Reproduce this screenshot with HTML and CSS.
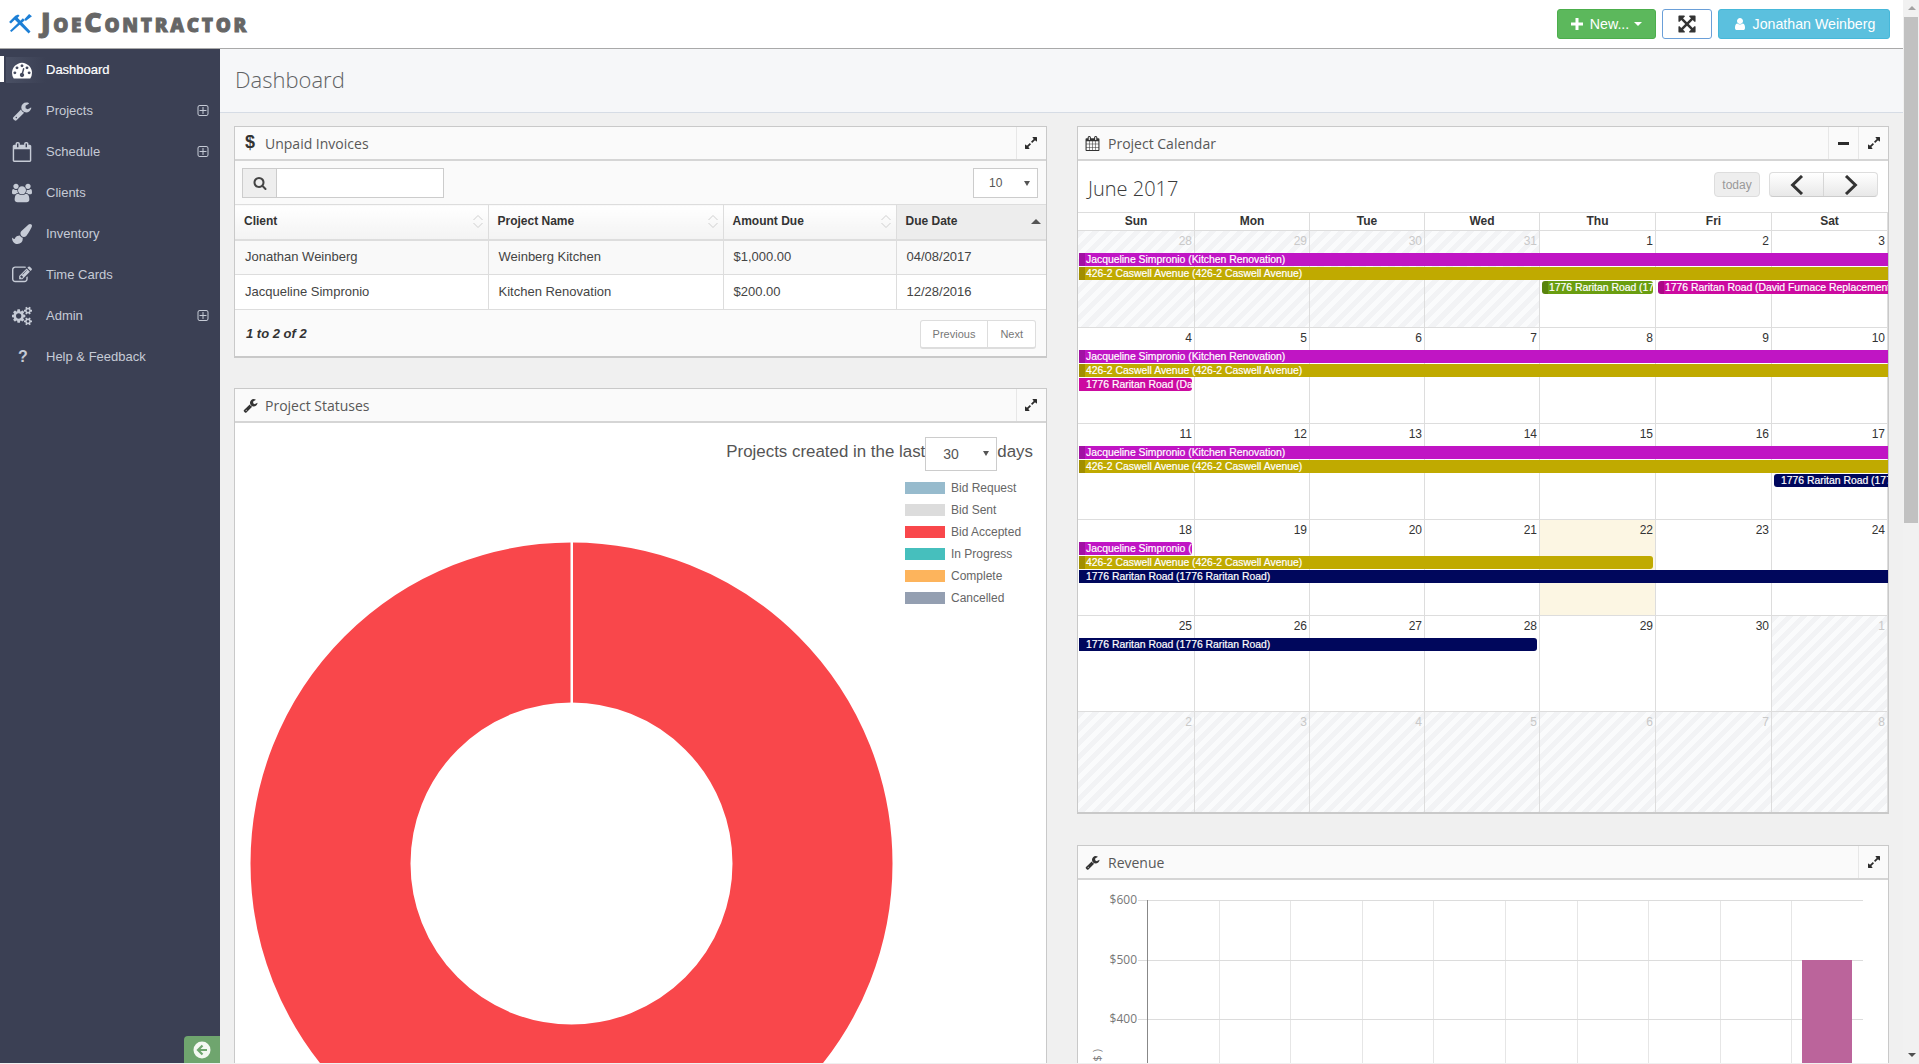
FILE: index.html
```html
<!DOCTYPE html>
<html lang="en">
<head>
<meta charset="utf-8">
<title>JoeContractor - Dashboard</title>
<link rel="stylesheet" href="styles.css">
</head>
<body>
<svg class="sprite" aria-hidden="true">
  <symbol id="i-dash" viewBox="0 0 1792 1792"><path d="M384 1152q0-53-37.5-90.5t-90.5-37.5-90.5 37.5-37.5 90.5 37.5 90.5 90.5 37.5 90.5-37.5 37.5-90.5zm192-448q0-53-37.5-90.5t-90.5-37.5-90.5 37.5-37.5 90.5 37.5 90.5 90.5 37.5 90.5-37.5 37.5-90.5zm428 481l101-382q6-26-7.5-48.5t-38.5-29.5-48 6.5-30 39.5l-101 382q-60 5-107 43.5t-63 98.5q-20 77 20 146t117 89 146-20 89-117q16-60-6-117t-72-91zm660-33q0-53-37.5-90.5t-90.5-37.5-90.5 37.5-37.5 90.5 37.5 90.5 90.5 37.5 90.5-37.5 37.5-90.5zm-640-640q0-53-37.5-90.5t-90.5-37.5-90.5 37.5-37.5 90.5 37.5 90.5 90.5 37.5 90.5-37.5 37.5-90.5zm448 192q0-53-37.5-90.5t-90.5-37.5-90.5 37.5-37.5 90.5 37.5 90.5 90.5 37.5 90.5-37.5 37.5-90.5zm320 448q0 261-141 483-19 29-54 29h-1402q-35 0-54-29-141-221-141-483 0-182 71-348t191-286 286-191 348-71 348 71 286 191 191 286 71 348z"/></symbol>
  <symbol id="i-wrench" viewBox="0 0 1792 1792"><path d="M448 1472q0-26-19-45t-45-19-45 19-19 45 19 45 45 19 45-19 19-45zm644-420l-682 682q-37 37-90 37-52 0-91-37l-106-108q-38-36-38-90 0-53 38-91l681-681q39 98 114.5 173.5t173.5 114.5zm634-435q0 39-23 106-47 134-164.5 217.5t-258.5 83.5q-185 0-316.5-131.5t-131.5-316.5 131.5-316.5 316.5-131.5q58 0 121.5 16.5t107.5 46.5q16 11 16 28t-16 28l-293 169v224l193 107q5-3 79-48.5t135.5-81 70.5-35.5q15 0 23.5 10t8.5 25z"/></symbol>
  <symbol id="i-cal-o" viewBox="0 0 1792 1792"><path d="M192 1664h1408v-1024h-1408v1024zm384-1216v-288q0-14-9-23t-23-9h-64q-14 0-23 9t-9 23v288q0 14 9 23t23 9h64q14 0 23-9t9-23zm768 0v-288q0-14-9-23t-23-9h-64q-14 0-23 9t-9 23v288q0 14 9 23t23 9h64q14 0 23-9t9-23zm384-64v1280q0 52-38 90t-90 38h-1408q-52 0-90-38t-38-90v-1280q0-52 38-90t90-38h128v-96q0-66 47-113t113-47h64q66 0 113 47t47 113v96h384v-96q0-66 47-113t113-47h64q66 0 113 47t47 113v96h128q52 0 90 38t38 90z"/></symbol>
  <symbol id="i-users" viewBox="0 0 1920 1792"><path d="M593 896q-162 5-265 128h-134q-82 0-138-40.5t-56-118.5q0-353 124-353 6 0 43.5 21t97.5 42.5 119 21.5q67 0 133-23-5 37-5 66 0 139 81 256zm1071 637q0 120-73 189.5t-194 69.5h-874q-121 0-194-69.5t-73-189.5q0-53 3.5-103.5t14-109 26.5-108.5 43-97.5 62-81 85.5-53.5 111.5-20q10 0 43 21.5t73 48 107 48 135 21.5 135-21.5 107-48 73-48 43-21.5q61 0 111.5 20t85.5 53.5 62 81 43 97.5 26.5 108.5 14 109 3.5 103.5zm-1024-1277q0 106-75 181t-181 75-181-75-75-181 75-181 181-75 181 75 75 181zm704 384q0 159-112.5 271.5t-271.5 112.5-271.5-112.5-112.5-271.5 112.5-271.5 271.5-112.5 271.5 112.5 112.5 271.5zm576 225q0 78-56 118.5t-138 40.5h-134q-103-123-265-128 81-117 81-256 0-29-5-66 66 23 133 23 59 0 119-21.5t97.5-42.5 43.5-21q124 0 124 353zm-128-609q0 106-75 181t-181 75-181-75-75-181 75-181 181-75 181 75 75 181z"/></symbol>
  <symbol id="i-brush" viewBox="0 0 1792 1792"><path d="M1615 0q70 0 122.5 46.5t52.5 116.5q0 63-45 151-332 629-465 752-97 91-218 91-126 0-216.5-92.5t-90.5-219.5q0-128 92-212l638-579q59-54 130-54zm-909 1034q39 76 106.5 130t150.5 76l1 71q4 213-129.5 347t-348.5 134q-123 0-218-46.5t-152.5-127.5-86.5-183-29-220q7 5 41 30t62 44.5 59 36.5 46 17q41 0 55-37 25-66 57.5-112.5t69.5-76 88-47.5 103-25.5 125-10.5z"/></symbol>
  <symbol id="i-edit" viewBox="0 0 1792 1792"><path d="M888 1184l116-116-152-152-116 116v56h96v96h56zm440-720q-16-16-33 1l-350 350q-17 17-1 33t33-1l350-350q17-17 1-33zm80 594v190q0 119-84.5 203.5t-203.5 84.5h-832q-119 0-203.5-84.5t-84.5-203.5v-832q0-119 84.5-203.5t203.5-84.5h832q63 0 117 25 15 7 18 23 3 17-9 29l-49 49q-14 14-32 8-23-6-45-6h-832q-66 0-113 47t-47 113v832q0 66 47 113t113 47h832q66 0 113-47t47-113v-126q0-13 9-22l64-64q15-15 35-7t20 29zm-96-738l288 288-672 672h-288v-288zm444 132l-92 92-288-288 92-92q28-28 68-28t68 28l152 152q28 28 28 68t-28 68z"/></symbol>
  <symbol id="i-cogs" viewBox="0 0 1920 1792"><path d="M896 896q0-106-75-181t-181-75-181 75-75 181 75 181 181 75 181-75 75-181zm768 512q0-52-38-90t-90-38-90 38-38 90q0 53 37.5 90.5t90.5 37.5 90.5-37.5 37.5-90.5zm0-1024q0-52-38-90t-90-38-90 38-38 90q0 53 37.5 90.5t90.5 37.5 90.5-37.5 37.5-90.5zm-384 421v185q0 10-7 19.5t-16 10.5l-155 24q-11 35-32 76 34 48 90 115 7 11 7 20 0 12-7 19-23 30-82.5 89.5t-78.5 59.5q-11 0-21-7l-115-90q-37 19-77 31-11 108-23 155-7 24-30 24h-186q-11 0-20-7.5t-10-17.5l-23-153q-34-10-75-31l-118 89q-7 7-20 7-11 0-21-8-144-133-144-160 0-9 7-19 10-14 41-53t47-61q-23-44-35-82l-152-24q-10-1-17-9.5t-7-19.5v-185q0-10 7-19.5t16-10.5l155-24q11-35 32-76-34-48-90-115-7-11-7-20 0-12 7-20 22-30 82-89t79-59q11 0 21 7l115 90q34-18 77-32 11-108 23-154 7-24 30-24h186q11 0 20 7.5t10 17.5l23 153q34 10 75 31l118-89q8-7 20-7 11 0 21 8 144 133 144 160 0 8-7 19-12 16-42 54t-45 60q23 48 34 82l152 23q10 2 17 10.5t7 19.5zm640 533v140q0 16-149 31-12 27-30 52 51 113 51 138 0 4-4 7-122 71-124 71-8 0-46-47t-52-68q-20 2-30 2t-30-2q-14 21-52 68t-46 47q-2 0-124-71-4-3-4-7 0-25 51-138-18-25-30-52-149-15-149-31v-140q0-16 149-31 13-29 30-52-51-113-51-138 0-4 4-7 4-2 35-20t59-34 30-16q8 0 46 46.5t52 67.5q20-2 30-2t30 2q51-71 92-112l6-2q4 0 124 70 4 3 4 7 0 25-51 138 17 23 30 52 149 15 149 31zm0-1024v140q0 16-149 31-12 27-30 52 51 113 51 138 0 4-4 7-122 71-124 71-8 0-46-47t-52-68q-20 2-30 2t-30-2q-14 21-52 68t-46 47q-2 0-124-71-4-3-4-7 0-25 51-138-18-25-30-52-149-15-149-31v-140q0-16 149-31 13-29 30-52-51-113-51-138 0-4 4-7 4-2 35-20t59-34 30-16q8 0 46 46.5t52 67.5q20-2 30-2t30 2q51-71 92-112l6-2q4 0 124 70 4 3 4 7 0 25-51 138 17 23 30 52 149 15 149 31z"/></symbol>
  <symbol id="i-plus-sq" viewBox="0 0 1792 1792"><path d="M1344 800v64q0 14-9 23t-23 9h-352v352q0 14-9 23t-23 9h-64q-14 0-23-9t-9-23v-352h-352q-14 0-23-9t-9-23v-64q0-14 9-23t23-9h352v-352q0-14 9-23t23-9h64q14 0 23 9t9 23v352h352q14 0 23 9t9 23zm128 448v-832q0-66-47-113t-113-47h-832q-66 0-113 47t-47 113v832q0 66 47 113t113 47h832q66 0 113-47t47-113zm128-832v832q0 119-84.5 203.5t-203.5 84.5h-832q-119 0-203.5-84.5t-84.5-203.5v-832q0-119 84.5-203.5t203.5-84.5h832q119 0 203.5 84.5t84.5 203.5z"/></symbol>
  <symbol id="i-search" viewBox="0 0 1792 1792"><path d="M1216 832q0-185-131.5-316.5t-316.5-131.5-316.5 131.5-131.5 316.5 131.5 316.5 316.5 131.5 316.5-131.5 131.5-316.5zm512 832q0 52-38 90t-90 38q-54 0-90-38l-343-342q-179 124-399 124-143 0-273.5-55.5t-225-150-150-225-55.5-273.5 55.5-273.5 150-225 225-150 273.5-55.5 273.5 55.5 225 150 150 225 55.5 273.5q0 220-124 399l343 343q37 37 37 90z"/></symbol>
  <symbol id="i-expand" viewBox="0 0 1792 1792"><path d="M883 1056q0 13-10 23l-332 332 144 144q19 19 19 45t-19 45-45 19h-448q-26 0-45-19t-19-45v-448q0-26 19-45t45-19 45 19l144 144 332-332q10-10 23-10t23 10l114 114q10 10 10 23zm781-864v448q0 26-19 45t-45 19-45-19l-144-144-332 332q-10 10-23 10t-23-10l-114-114q-10-10-10-23t10-23l332-332-144-144q-19-19-19-45t19-45 45-19h448q26 0 45 19t19 45z"/></symbol>
  <symbol id="i-arrows" viewBox="-128 -128 1792 1792"><path d="M1283 413l-355 355 355 355 144-144q29-31 70-14 39 17 39 59v448q0 26-19 45t-45 19h-448q-42 0-59-40-17-39 14-69l144-144-355-355-355 355 144 144q31 30 14 69-17 40-59 40h-448q-26 0-45-19t-19-45v-448q0-42 40-59 39-17 69 14l144 144 355-355-355-355-144 144q-19 19-45 19-12 0-24-5-40-17-40-59v-448q0-26 19-45t45-19h448q42 0 59 40 17 39-14 69l-144 144 355 355 355-355-144-144q-31-30-14-69 17-40 59-40h448q26 0 45 19t19 45v448q0 42-39 59-13 5-25 5-26 0-45-19z"/></symbol>
  <symbol id="i-cal" viewBox="0 0 1792 1792"><path d="M192 1664h288v-288h-288v288zm352 0h320v-288h-320v288zm-352-352h288v-320h-288v320zm352 0h320v-320h-320v320zm-352-384h288v-288h-288v288zm736 736h320v-288h-320v288zm-384-736h320v-288h-320v288zm768 736h288v-288h-288v288zm-384-352h320v-320h-320v320zm-352-864v-288q0-13-9.5-22.5t-22.5-9.5h-64q-13 0-22.5 9.5t-9.5 22.5v288q0 13 9.5 22.5t22.5 9.5h64q13 0 22.5-9.5t9.5-22.5zm736 864h288v-320h-288v320zm-384-384h320v-288h-320v288zm384 0h288v-288h-288v288zm32-480v-288q0-13-9.5-22.5t-22.5-9.5h-64q-13 0-22.5 9.5t-9.5 22.5v288q0 13 9.5 22.5t22.5 9.5h64q13 0 22.5-9.5t9.5-22.5zm384-64v1280q0 52-38 90t-90 38h-1408q-52 0-90-38t-38-90v-1280q0-52 38-90t90-38h128v-96q0-66 47-113t113-47h64q66 0 113 47t47 113v96h384v-96q0-66 47-113t113-47h64q66 0 113 47t47 113v96h128q52 0 90 38t38 90z"/></symbol>
  <symbol id="i-user" viewBox="0 0 1792 1792"><path d="M1536 1399q0 109-62.5 187t-150.5 78h-854q-88 0-150.5-78t-62.5-187q0-85 8.5-160.5t31.5-152 58.5-131 94-89 134.5-34.5q131 128 313 128t313-128q76 0 134.5 34.5t94 89 58.5 131 31.5 152 8.5 160.5zm-256-887q0 159-112.5 271.5t-271.5 112.5-271.5-112.5-112.5-271.5 112.5-271.5 271.5-112.5 271.5 112.5 112.5 271.5z"/></symbol>
  <symbol id="i-sort" viewBox="0 0 12 15"><path d="M1.5 6 6 1.5 10.5 6M1.5 9 6 13.5 10.5 9" fill="none" stroke="#d0d0d0" stroke-width="1"/></symbol>
</svg>

<div class="app">
  <div class="page">
    <header class="topbar">
      <div class="logo">
        <svg class="logo-mark" viewBox="0 0 26 22"><path d="M1 9.500 7.500 3l3-1.500 1.500 1.500-2 2 13.500 14.500-2 2L7 7l-3 3-1 1z" fill="#1c7fd6"/><path d="M25 3.500 22 1l-5 5.500 1.500 2zM17.500 7.500 3.500 20l-1.500-1.500L15.500 5.500z" fill="#1c7fd6"/></svg>
        <span class="logo-text">JoeContractor</span>
      </div>
      <div class="top-actions">
        <span class="btn btn-new"><svg class="ic-plus" viewBox="0 0 12 12"><path d="M4.500 0h3v4.500H12v3H7.500V12h-3V7.500H0v-3h4.500z"/></svg>New...<i class="caret"></i></span>
        <span class="btn btn-full"><svg class="ic-arrows"><use href="#i-arrows"/></svg></span>
        <span class="btn btn-user"><svg class="ic-user"><use href="#i-user"/></svg>Jonathan Weinberg</span>
      </div>
    </header>

    <div class="shell">
      <nav class="sidebar">
        <a class="nav-item active"><span class="nav-ic"><svg><use href="#i-dash"/></svg></span><span class="nav-label">Dashboard</span></a>
        <a class="nav-item"><span class="nav-ic"><svg><use href="#i-wrench"/></svg></span><span class="nav-label">Projects</span><svg class="nav-plus"><use href="#i-plus-sq"/></svg></a>
        <a class="nav-item"><span class="nav-ic"><svg><use href="#i-cal-o"/></svg></span><span class="nav-label">Schedule</span><svg class="nav-plus"><use href="#i-plus-sq"/></svg></a>
        <a class="nav-item"><span class="nav-ic"><svg><use href="#i-users"/></svg></span><span class="nav-label">Clients</span></a>
        <a class="nav-item"><span class="nav-ic"><svg><use href="#i-brush"/></svg></span><span class="nav-label">Inventory</span></a>
        <a class="nav-item"><span class="nav-ic"><svg><use href="#i-edit"/></svg></span><span class="nav-label">Time Cards</span></a>
        <a class="nav-item"><span class="nav-ic"><svg><use href="#i-cogs"/></svg></span><span class="nav-label">Admin</span><svg class="nav-plus"><use href="#i-plus-sq"/></svg></a>
        <a class="nav-item"><span class="nav-ic nav-q">?</span><span class="nav-label">Help &amp; Feedback</span></a>
        <div class="collapse"><svg viewBox="0 0 18 18"><circle cx="9" cy="9" r="8.500" fill="#f4f8f2"/><path d="M9.500 4.500 5 9l4.500 4.500M5.500 9H14" fill="none" stroke="#6fa56e" stroke-width="2.200"/></svg></div>
      </nav>

      <main class="main">
        <div class="title-band"><h1>Dashboard</h1></div>
        <div class="columns">
          <div class="col">
            <section class="panel">
              <div class="panel-head">
                <span class="head-ic head-dollar">$</span><span class="head-title">Unpaid Invoices</span>
                <span class="head-btn"><svg><use href="#i-expand"/></svg></span>
              </div>
              <div class="inv-tools">
                <div class="search"><span class="search-ic"><svg><use href="#i-search"/></svg></span><span class="search-input"></span></div>
                <div class="select select-len"><span>10</span><i></i></div>
              </div>
              <table class="inv-table">
                <colgroup><col class="c-client"><col class="c-proj"><col class="c-amt"><col class="c-date"></colgroup>
                <thead>
                  <tr>
                    <th>Client<svg class="sort"><use href="#i-sort"/></svg></th>
                    <th>Project Name<svg class="sort"><use href="#i-sort"/></svg></th>
                    <th>Amount Due<svg class="sort"><use href="#i-sort"/></svg></th>
                    <th class="sorted">Due Date<i class="sort-asc"></i></th>
                  </tr>
                </thead>
                <tbody>
                  <tr class="odd"><td>Jonathan Weinberg</td><td>Weinberg Kitchen</td><td>$1,000.00</td><td>04/08/2017</td></tr>
                  <tr><td>Jacqueline Simpronio</td><td>Kitchen Renovation</td><td>$200.00</td><td>12/28/2016</td></tr>
                </tbody>
              </table>
              <div class="inv-foot">
                <span class="inv-count">1 to 2 of 2</span>
                <div class="pager"><span>Previous</span><span>Next</span></div>
              </div>
            </section>

            <section class="panel panel-white">
              <div class="panel-head">
                <span class="head-ic"><svg><use href="#i-wrench"/></svg></span><span class="head-title">Project Statuses</span>
                <span class="head-btn"><svg><use href="#i-expand"/></svg></span>
              </div>
              <div class="range">Projects created in the last<div class="select select-range"><span>30</span><i></i></div>days</div>
              <div class="donut-wrap">
                <svg class="donut" width="811" height="600" viewBox="0 0 811 600">
                  <circle cx="336.500" cy="392.500" r="241" fill="none" stroke="#f9474b" stroke-width="160"/>
                  <rect x="335.500" y="70" width="2.500" height="165" fill="#fff"/>
                </svg>
                <ul class="legend">
                  <li><i class="sw-a"></i>Bid Request</li>
                  <li><i class="sw-b"></i>Bid Sent</li>
                  <li><i class="sw-c"></i>Bid Accepted</li>
                  <li><i class="sw-d"></i>In Progress</li>
                  <li><i class="sw-e"></i>Complete</li>
                  <li><i class="sw-f"></i>Cancelled</li>
                </ul>
              </div>
            </section>
          </div>

          <div class="col col-right">
            <section class="panel panel-white">
              <div class="panel-head">
                <span class="head-ic head-ic-cal"><svg><use href="#i-cal"/></svg></span><span class="head-title">Project Calendar</span>
                <span class="head-btn"><i class="minus"></i></span>
                <span class="head-btn head-btn-next"><svg><use href="#i-expand"/></svg></span>
              </div>
              <div class="cal-tools">
                <h2>June 2017</h2>
                <span class="cal-today">today</span>
                <div class="cal-nav">
                  <span><svg viewBox="0 0 14 16"><path d="M11 .8 3.500 8l7.500 7.200" fill="none" stroke="#333" stroke-width="2.400"/></svg></span>
                  <span><svg viewBox="0 0 14 16"><path d="M3 .8 10.500 8 3 15.200" fill="none" stroke="#333" stroke-width="2.400"/></svg></span>
                </div>
              </div>
              <div class="cal-head"><span>Sun</span><span>Mon</span><span>Tue</span><span>Wed</span><span>Thu</span><span>Fri</span><span>Sat</span></div>

              <div class="week week-first">
                <div class="day other d1">28</div><div class="day other d2">29</div><div class="day other d3">30</div><div class="day other d4">31</div><div class="day d5">1</div><div class="day d6">2</div><div class="day d7">3</div>
                <div class="ev ev-purple r1 from1 span7 cont">Jacqueline Simpronio (Kitchen Renovation)</div>
                <div class="ev ev-gold r2 from1 span7 cont">426-2 Caswell Avenue (426-2 Caswell Avenue)</div>
                <div class="ev ev-green r3 from5 span1 start end">1776 Raritan Road (1776 Raritan Road)</div>
                <div class="ev ev-magenta r3 from6 span2 start">1776 Raritan Road (David Furnace Replacement)</div>
              </div>
              <div class="week">
                <div class="day d1">4</div><div class="day d2">5</div><div class="day d3">6</div><div class="day d4">7</div><div class="day d5">8</div><div class="day d6">9</div><div class="day d7">10</div>
                <div class="ev ev-purple r1 from1 span7 cont">Jacqueline Simpronio (Kitchen Renovation)</div>
                <div class="ev ev-gold r2 from1 span7 cont">426-2 Caswell Avenue (426-2 Caswell Avenue)</div>
                <div class="ev ev-magenta r3 from1 span1 end plain">1776 Raritan Road (David Furnace Replacement)</div>
              </div>
              <div class="week">
                <div class="day d1">11</div><div class="day d2">12</div><div class="day d3">13</div><div class="day d4">14</div><div class="day d5">15</div><div class="day d6">16</div><div class="day d7">17</div>
                <div class="ev ev-purple r1 from1 span7 cont">Jacqueline Simpronio (Kitchen Renovation)</div>
                <div class="ev ev-gold r2 from1 span7 cont">426-2 Caswell Avenue (426-2 Caswell Avenue)</div>
                <div class="ev ev-navy r3 from7 span1 start">1776 Raritan Road (1776 Raritan Road)</div>
              </div>
              <div class="week">
                <div class="day d1">18</div><div class="day d2">19</div><div class="day d3">20</div><div class="day d4">21</div><div class="day d5 today">22</div><div class="day d6">23</div><div class="day d7">24</div>
                <div class="ev ev-purple r1 from1 span1 cont end">Jacqueline Simpronio (Kitchen Renovation)</div>
                <div class="ev ev-gold r2 from1 span5 cont end">426-2 Caswell Avenue (426-2 Caswell Avenue)</div>
                <div class="ev ev-navy r3 from1 span7 plain">1776 Raritan Road (1776 Raritan Road)</div>
              </div>
              <div class="week">
                <div class="day d1">25</div><div class="day d2">26</div><div class="day d3">27</div><div class="day d4">28</div><div class="day d5">29</div><div class="day d6">30</div><div class="day other d7">1</div>
                <div class="ev ev-navy r1 from1 span4 end plain">1776 Raritan Road (1776 Raritan Road)</div>
              </div>
              <div class="week week-last">
                <div class="day other d1">2</div><div class="day other d2">3</div><div class="day other d3">4</div><div class="day other d4">5</div><div class="day other d5">6</div><div class="day other d6">7</div><div class="day other d7">8</div>
              </div>
            </section>

            <section class="panel panel-white">
              <div class="panel-head">
                <span class="head-ic head-ic-cal"><svg><use href="#i-wrench"/></svg></span><span class="head-title">Revenue</span>
                <span class="head-btn"><svg><use href="#i-expand"/></svg></span>
              </div>
              <svg class="rev-chart" width="810" height="200" viewBox="0 0 810 200">
                <g stroke="#e6e6e6" stroke-width="1">
                  <path d="M141.500 19V200M212.500 19V200M284.500 19V200M355.500 19V200M427.500 19V200M499.500 19V200M570.500 19V200M642.500 19V200M713.500 19V200"/>
                </g>
                <g stroke="#dcdcdc" stroke-width="1">
                  <path d="M60 19.500H785M60 79.500H785M60 138.500H785M60 197.500H785"/>
                </g>
                <path d="M69.500 19V200" stroke="#888" stroke-width="1"/>
                <rect x="724" y="79" width="50" height="121" fill="#bb649b"/>
                <g class="rev-labels">
                  <text x="59" y="23" text-anchor="end">$600</text>
                  <text x="59" y="83" text-anchor="end">$500</text>
                  <text x="59" y="142" text-anchor="end">$400</text>
                </g>
                <text class="rev-axis" transform="translate(23 168) rotate(-90)" text-anchor="end">( $ )</text>
              </svg>
            </section>
          </div>
        </div>
      </main>
    </div>
  </div>
  <aside class="scrollbar">
    <i class="sb-up"></i>
    <i class="sb-thumb"></i>
    <i class="sb-down"></i>
  </aside>
</div>
</body>
</html>
```

FILE: styles.css
```css
* { box-sizing: border-box; }
html, body { margin: 0; padding: 0; background: #f0f0f0; }
body { font-family: "Liberation Sans", Arial, sans-serif; font-size: 13px; color: #333; }
.sprite { display: none; }
svg { fill: currentColor; }

.app { display: flex; width: 1919px; height: 1063px; overflow: hidden; }
.page { flex: 0 0 1903px; width: 1903px; display: flex; flex-direction: column; min-height: 0; }

/* top bar */
.topbar { flex: 0 0 49px; display: flex; align-items: center; justify-content: space-between; background: #fff; border-bottom: 1px solid #a9a9a9; padding: 0 13px 0 8px; }
.logo { display: flex; align-items: center; gap: 8px; margin-top: -1px; }
.logo-mark { width: 25px; height: 21px; }
.logo-text { font-family: "Open Sans", "Liberation Sans", sans-serif; font-weight: 800; font-variant: small-caps; font-size: 27px; line-height: 30px; margin-top: -3px; color: #666; letter-spacing: 2.7px; -webkit-text-stroke: 0.9px #666; }
.top-actions { display: flex; gap: 6px; }
.btn { display: flex; align-items: center; justify-content: center; height: 30px; border-radius: 3px; font-size: 14.2px; color: #fff; border: 1px solid transparent; }
.btn-new { width: 99px; background: #5cb85c; border-color: #4cae4c; }
.ic-plus { width: 12px; height: 12px; margin-right: 7px; }
.caret { width: 0; height: 0; margin-left: 5px; border-left: 4px solid transparent; border-right: 4px solid transparent; border-top: 4px solid #fff; }
.btn-full { width: 50px; background: #fff; border-color: #6a9fd8; color: #333; }
.ic-arrows { width: 20px; height: 20px; }
.btn-user { width: 172px; background: #5bc0de; border-color: #46b8da; }
.ic-user { width: 14px; height: 14px; margin-right: 6px; }

.shell { flex: 1; display: flex; min-height: 0; }

/* sidebar */
.sidebar { flex: 0 0 220px; display: flex; flex-direction: column; background: #3b4054; color: #c6cbd6; }
.nav-item { flex: 0 0 41px; display: flex; align-items: center; position: relative; font-size: 13px; }
.nav-ic { width: 46px; padding-left: 12px; display: flex; align-items: center; }
.nav-ic svg { width: 20px; height: 20px; }
.nav-q { font-weight: bold; font-size: 16px; padding-left: 18px; }
.nav-label { flex: 1; }
.nav-plus { width: 14px; height: 14px; margin-right: 10px; }
.active { color: #fff; font-weight: bold; }
.active .nav-label { font-weight: normal; -webkit-text-stroke: 0.2px #fff; }
.active::before { content: ""; position: absolute; left: 0; top: 7px; width: 4px; height: 26px; background: #fff; }
.active .nav-ic { background: linear-gradient(90deg, #4a5064 0, #3b4054 100%); margin-left: 6px; width: 40px; padding-left: 6px; height: 26px; }
.collapse { margin-top: auto; align-self: flex-end; width: 36px; height: 27px; background: #6fa56e; border-radius: 4px 0 0 0; display: flex; align-items: center; justify-content: center; }
.collapse svg { width: 18px; height: 18px; }

/* main */
.main { flex: 1; min-width: 0; overflow: hidden; background: #f0f0f0; }
.title-band { height: 64px; background: #f6f7f9; border-bottom: 1px solid #d6dce5; padding: 0 15px 4px; display: flex; align-items: center; }
.title-band h1 { margin: 0; font-family: "Open Sans", sans-serif; font-weight: 300; font-size: 22px; color: #5f6264; }
.columns { display: grid; grid-template-columns: 813px 812px; column-gap: 30px; padding: 13px 14px 30px; }
.col { display: flex; flex-direction: column; gap: 30px; min-width: 0; }
.col-right { gap: 31px; }

.panel { background: #fafafa; border: 1px solid #c9c9c9; border-bottom-width: 2px; }
.panel-white .panel-head { background: #fafafa; }
.panel-white { background: #fff; }
.panel-head { display: flex; align-items: center; height: 34px; padding-left: 8px; background: #fafafa; border-bottom: 2px solid #d5d5d5; }
.head-ic { width: 22px; display: flex; align-items: center; color: #333; }
.head-ic svg { width: 15px; height: 15px; }
.head-ic-cal { width: 23px; padding-left: 0; margin-left: -1px; }
.head-dollar { font-weight: bold; font-size: 18px; padding-left: 2px; line-height: 20px; margin-top: -2px; }
.head-title { flex: 1; font-family: "Open Sans", sans-serif; font-size: 14px; color: #585858; }
.head-btn { width: 30px; height: 32px; border-left: 1px solid #e7e7e7; display: flex; align-items: center; justify-content: center; color: #2c2c2c; }
.head-btn svg { width: 14px; height: 14px; }
.col:first-child .head-btn { padding-right: 2px; }
.minus { width: 11px; height: 3px; background: #2c2c2c; }

/* invoices */
.inv-tools { display: flex; justify-content: space-between; align-items: center; height: 43px; padding: 0 8px 0 7px; }
.search { display: flex; height: 30px; border: 1px solid #ccc; width: 202px; }
.search-ic { width: 34px; background: #eee; border-right: 1px solid #ccc; display: flex; align-items: center; justify-content: center; color: #444; }
.search-ic svg { width: 14px; height: 14px; }
.search-input { flex: 1; background: #fff; }
.select { display: flex; align-items: center; background: #fff; border: 1px solid #ccc; position: relative; }
.select i { position: absolute; width: 0; height: 0; border-left: 3px solid transparent; border-right: 3px solid transparent; border-top: 5px solid #555; }
.select-len { width: 65px; height: 30px; padding-left: 15px; font-size: 12px; color: #555; }
.select-len i { right: 7px; top: 12px; }

.inv-table { width: 811px; table-layout: fixed; border-collapse: collapse; }
.c-client { width: 253px; }
.c-proj { width: 235px; }
.c-amt { width: 173px; }
.inv-table th { height: 35px; padding: 0 9px 2px; text-align: left; font-size: 12px; color: #333; background: linear-gradient(#fff, #f3f3f3); border-top: 1px solid #ddd; border-bottom: 2px solid #ddd; border-right: 1px solid #ddd; position: relative; }
.inv-table th:last-child { border-right: 0; }
.inv-table .sorted { background: #ededed; }
.sort { position: absolute; right: 4px; top: 9px; width: 12px; height: 15px; }
.sort-asc { position: absolute; right: 5px; top: 14px; width: 0; height: 0; border-left: 5px solid transparent; border-right: 5px solid transparent; border-bottom: 5px solid #555; }
.inv-table td { height: 35px; padding: 0 10px 2px; font-size: 13px; color: #444; background: #fff; border-bottom: 1px solid #ddd; border-right: 1px solid #ddd; }
.inv-table td:last-child { border-right: 0; }
.inv-table .odd td { background: #f9f9f9; }
.inv-foot { display: flex; justify-content: space-between; align-items: center; height: 46px; padding: 0 10px 0 11px; }
.inv-count { font-weight: bold; font-style: italic; font-size: 13px; color: #333; }
.pager { display: flex; height: 29px; margin-top: 2px; background: #fff; border: 1px solid #ddd; border-bottom-width: 2px; border-radius: 3px; font-size: 11px; color: #777; }
.pager span { display: flex; align-items: center; padding: 0 12px; }
.pager span + span { border-left: 1px solid #ddd; padding: 0 12px; }

/* project statuses */
.range { display: flex; align-items: flex-start; justify-content: flex-end; padding: 14px 13px 0 0; font-size: 16.9px; line-height: 30px; color: #555; background: #fff; height: 48px; }
.select-range { width: 72px; height: 34px; padding-left: 17px; font-size: 14px; color: #555; }
.select-range i { right: 7px; top: 13px; }
.donut-wrap { position: relative; height: 600px; background: #fff; }
.donut { display: block; }
.legend { position: absolute; left: 670px; top: 6px; margin: 0; padding: 0; list-style: none; font-size: 12px; color: #666; }
.legend li { display: flex; align-items: center; height: 22px; }
.legend i { width: 40px; height: 12px; margin-right: 6px; }
.sw-a { background: #97bbcd; }
.sw-b { background: #dcdcdc; }
.sw-c { background: #f9474b; }
.sw-d { background: #46bfbd; }
.sw-e { background: #fdb45c; }
.sw-f { background: #949fb1; }

/* calendar */
.cal-tools { display: flex; align-items: center; height: 51px; padding: 0 10px 4px 10px; background: #fff; }
.cal-tools h2 { flex: 1; margin: 7px 0 0; font-family: "Open Sans", sans-serif; font-weight: 300; font-size: 20px; color: #3a3a3a; }
.cal-today { display: flex; align-items: center; justify-content: center; width: 46px; height: 25px; margin-right: 9px; background: #eee; border: 1px solid #ddd; border-radius: 4px; font-size: 12px; color: #999; }
.cal-nav { display: flex; width: 109px; height: 25px; border: 1px solid #ddd; border-bottom-color: #ccc; border-radius: 4px; background: linear-gradient(#fff, #e8e8e8); }
.cal-nav span { flex: 1; display: flex; align-items: center; justify-content: center; }
.cal-nav span + span { border-left: 1px solid #d6d6d6; }
.cal-nav svg { width: 18px; height: 20px; }
.cal-head { display: grid; grid-template-columns: 117px 115px 115px 115px 116px 116px 116px; height: 18px; border-top: 1px solid #ddd; font-weight: bold; font-size: 12px; text-align: center; line-height: 16px; color: #333; background: #fff; }
.cal-head span { border-right: 1px solid #ddd; }
.week { display: grid; grid-template-columns: 117px 115px 115px 115px 116px 116px 116px; grid-template-rows: 22px 14px 14px 14px 1fr; height: 96px; border-top: 1px solid #ddd; background: #fff; }
.week-first { height: 97px; }
.week-last { height: 101px; }
.day { grid-row: 1 / -1; padding: 1px 2px 0 0; font-size: 12px; line-height: 18px; text-align: right; color: #333; border-right: 1px solid #ddd; min-width: 0; }
.day.d1 { grid-column: 1; } .day.d2 { grid-column: 2; } .day.d3 { grid-column: 3; } .day.d4 { grid-column: 4; } .day.d5 { grid-column: 5; } .day.d6 { grid-column: 6; } .day.d7 { grid-column: 7; }
.other { color: #c9c9c9; background: repeating-linear-gradient(135deg, #f2f3f5 0 5px, #fafbfc 5px 10px); }
.today { background: #fcf6e3; }
.ev { height: 13px; line-height: 13px; font-size: 10.4px; font-weight: normal; color: #fff; white-space: nowrap; overflow: hidden; min-width: 0; z-index: 1; padding-left: 1px; margin-left: 1px; border-left: 6px solid rgba(0,0,0,.16); -webkit-text-stroke: 0.2px #fff; }
.plain { border-left-color: transparent; }
.r1 { grid-row: 2; } .r2 { grid-row: 3; } .r3 { grid-row: 4; }
.from1 { grid-column-start: 1; } .from5 { grid-column-start: 5; } .from6 { grid-column-start: 6; } .from7 { grid-column-start: 7; }
.span1 { grid-column-end: span 1; } .span2 { grid-column-end: span 2; } .span4 { grid-column-end: span 4; } .span5 { grid-column-end: span 5; } .span7 { grid-column-end: span 7; }
.start { margin-left: 2px; border-top-left-radius: 3px; border-bottom-left-radius: 3px; }
.end { margin-right: 3px; border-top-right-radius: 3px; border-bottom-right-radius: 3px; }
.ev-purple { background: #c015c4; }
.ev-gold { background: #c0aa00; }
.ev-magenta { background: #cc0aa0; }
.ev-green { background: #6a9e10; }
.ev-navy { background: #00075c; border-left-color: transparent; }

/* revenue */
.rev-chart { display: block; margin-top: 1px; background: #fff; }
.rev-labels { font-family: "Open Sans", sans-serif; font-size: 12px; fill: #777; }
.rev-axis { font-family: "Open Sans", sans-serif; font-size: 11px; fill: #777; }

/* scrollbar */
.scrollbar { flex: 0 0 16px; display: flex; flex-direction: column; align-items: flex-end; background: #f1f1f1; }
.sb-up, .sb-down { flex: 0 0 17px; width: 14px; position: relative; }
.sb-up::after, .sb-down::after { content: ""; position: absolute; left: 3px; width: 0; height: 0; border-left: 4px solid transparent; border-right: 4px solid transparent; }
.sb-up::after { top: 6px; border-bottom: 4px solid #a3a3a3; }
.sb-down::after { bottom: 6px; border-top: 4px solid #505050; }
.sb-thumb { flex: 0 0 506px; width: 14px; margin-right: 1px; background: #c1c1c1; }
.sb-down { margin-top: auto; }
```
